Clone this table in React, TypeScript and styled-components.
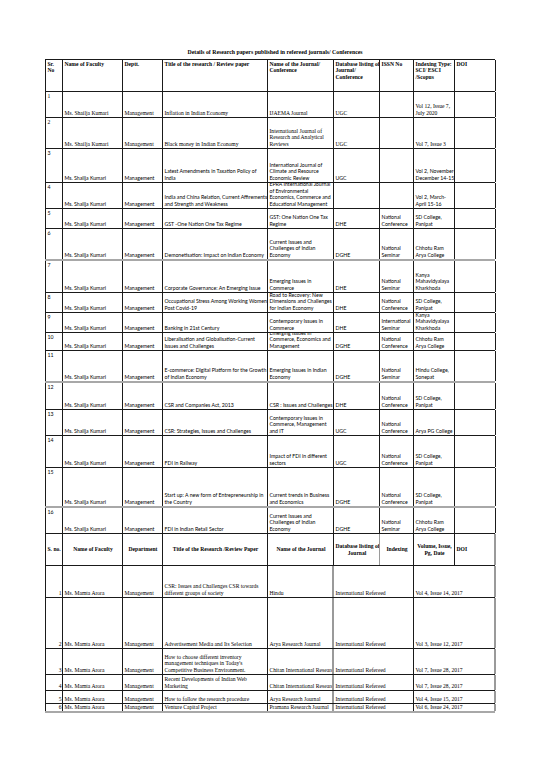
import React from "react";
import styled, { createGlobalStyle } from "styled-components";

const Global = createGlobalStyle`
  html, body { margin: 0; padding: 0; background: #ffffff; }
  body { font-family: "Liberation Serif", "Times New Roman", serif; color: #000; }
`;

const COLS = "17px 60px 40px 105px 66px 46px 34px 41px 41px";

const Sheet = styled.div`
  padding: 47px 0 0 45px;
  width: 450px;
`;

const Title = styled.div`
  height: 12px;
  font-size: 5.8px;
  font-weight: bold;
  text-align: center;
  line-height: 10px;
  padding-left: 10px;
`;

const Grid = styled.div`
  border-left: 1px solid #1a1a1a;
  border-top: 1px solid #1a1a1a;
  width: 450px;
  box-sizing: border-box;
`;

const Row = styled.div<{ $h: number; $line?: string; $lw?: number }>`
  display: grid;
  grid-template-columns: ${COLS};
  height: ${(p) => p.$h}px;
  box-sizing: border-box;
  border-bottom: ${(p) => p.$lw ?? 1}px solid ${(p) => p.$line ?? "#1a1a1a"};
  margin-left: -1px;
  padding-left: 1px;
`;

type CellProps = {
  $v?: "top" | "middle" | "bottom";
  $align?: "left" | "center" | "right";
  $bold?: boolean;
  $sans?: boolean;
  $span?: number;
  $rc?: string;
  $rw?: number;
};

const Cell = styled.div<CellProps>`
  display: flex;
  flex-direction: column;
  justify-content: ${(p) =>
    p.$v === "top" ? "flex-start" : p.$v === "middle" ? "center" : "flex-end"};
  text-align: ${(p) => p.$align ?? "left"};
  grid-column: span ${(p) => p.$span ?? 1};
  overflow: hidden;
  white-space: pre;
  box-sizing: border-box;
  padding: 0.5px 0.5px 0.3px 1.5px;
  border-right: ${(p) => p.$rw ?? 1}px solid ${(p) => p.$rc ?? "#1a1a1a"};
  font-family: ${(p) =>
    p.$sans ? '"Lato", "Open Sans", sans-serif' : '"Liberation Serif", "Times New Roman", serif'};
  font-size: ${(p) => (p.$sans ? "5.2px" : "5.6px")};
  line-height: 6.7px;
  font-weight: ${(p) => (p.$bold ? "bold" : "normal")};
`;

type R1 = { h: number; title: string; journal: string; db: string; issn: string; idx: string; line?: string; lw?: number; sans?: boolean };

const rows1: R1[] = [
  { h: 26, title: "Inflation in Indian Economy", journal: "IJAEMA Journal", db: "UGC", issn: "", idx: "Vol 12, Issue 7,\nJuly 2020" },
  { h: 31, title: "Black money in Indian Economy", journal: "International Journal of\nResearch and Analytical\nReviews", db: "UGC", issn: "", idx: "Vol 7, Issue 3" },
  { h: 34, title: "Latest Amendments in Taxation Policy of\nIndia", journal: "International Journal of\nClimate and Resource\nEconomic Review", db: "UGC", issn: "", idx: "Vol 2, November-\nDecember 14-15", sans: true },
  { h: 26, title: "India and China Relation, Current Affirements\nand Strength and Weakness", journal: "EPRA International Journal\nof Environmental\nEconomics, Commerce and\nEducational Management", db: "", issn: "", idx: "Vol 2, March-\nApril 15-16", sans: true },
  { h: 20, title: "GST -One Nation One Tax Regime", journal: "GST: One Nation One Tax\nRegime", db: "DHE", issn: "National\nConference", idx: "SD College,\nPanipat", sans: true },
  { h: 32, title: "Demonetisation: Impact on Indian Economy", journal: "Current Issues and\nChallenges of Indian\nEconomy", db: "DGHE", issn: "National\nSeminar", idx: "Chhotu Ram\nArya College", sans: true, line: "#a8a8a8", lw: 2 },
  { h: 32, title: "Corporate Governance: An Emerging Issue", journal: "Emerging Issues in\nCommerce", db: "DHE", issn: "National\nSeminar", idx: "Kanya\nMahavidyalaya\nKharkhoda", sans: true },
  { h: 20, title: "Occupational Stress Among Working Women\nPost Covid-19", journal: "Road to Recovery: New\nDimensions and Challenges\nfor Indian Economy", db: "DHE", issn: "National\nConference", idx: "SD College,\nPanipat", sans: true },
  { h: 20, title: "Banking in 21st Century", journal: "Contemporary Issues in\nCommerce", db: "DHE", issn: "International\nSeminar", idx: "Kanya\nMahavidyalaya\nKharkhoda", sans: true },
  { h: 18, title: "Liberalisation and Globalisation-Current\nIssues and Challenges", journal: "Emerging Issues in\nCommerce, Economics and\nManagement", db: "DGHE", issn: "National\nConference", idx: "Chhotu Ram\nArya College", sans: true },
  { h: 32, title: "E-commerce: Digital Platform for the Growth\nof Indian Economy", journal: "Emerging Issues in Indian\nEconomy", db: "DGHE", issn: "National\nSeminar", idx: "Hindu College,\nSonepat", sans: true, line: "#a8a8a8", lw: 2 },
  { h: 27, title: "CSR and Companies Act, 2013", journal: "CSR : Issues and Challenges", db: "DHE", issn: "National\nConference", idx: "SD College,\nPanipat", sans: true },
  { h: 26, title: "CSR: Strategies, Issues and Challenges", journal: "Contemporary Issues in\nCommerce, Management\nand IT", db: "UGC", issn: "National\nConference", idx: "Arya PG College", sans: true },
  { h: 32, title: "FDI in Railway", journal: "Impact of FDI in different\nsectors", db: "UGC", issn: "National\nConference", idx: "SD College,\nPanipat", sans: true },
  { h: 40, title: "Start up: A new form of Entrepreneurship in\nthe Country", journal: "Current trends in Business\nand Economics", db: "DGHE", issn: "National\nConference", idx: "SD College,\nPanipat", sans: true, line: "#a8a8a8", lw: 2 },
  { h: 26, title: "FDI in Indian Retail Sector", journal: "Current Issues and\nChallenges of Indian\nEconomy", db: "DGHE", issn: "National\nSeminar", idx: "Chhotu Ram\nArya College", sans: true },
];

type R2 = { h: number; title: string; journal: string; vol: string; line?: string; lw?: number };

const rows2: R2[] = [
  { h: 32, title: "CSR: Issues and Challenges CSR towards\ndifferent groups of society", journal: "Hindu", vol: "Vol 4, Issue 14, 2017" },
  { h: 51, title: "Advertisement Media and Its Selection", journal: "Arya Research Journal", vol: "Vol 3, Issue 12, 2017" },
  { h: 26, title: "How to choose different inventory\nmanagement techniques in Today's\nCompetitive Business Environment.", journal: "Chitan International Research Journal", vol: "Vol 7, Issue 28, 2017" },
  { h: 16, title: "Recent Developments of Indian Web\nMarketing", journal: "Chitan International Research Journal", vol: "Vol 7, Issue 28, 2017" },
  { h: 13, title: "How to follow the research procedure", journal: "Arya Research Journal", vol: "Vol 4, Issue 15, 2017" },
  { h: 9, title: "Venture Capital Project", journal: "Pramana Research Journal", vol: "Vol 6, Issue 24, 2017", line: "#a8a8a8", lw: 2 },
];

export default function App() {
  return (
    <>
      <Global />
      <Sheet>
        <Title>Details of Research papers published in refereed journals/ Conferences</Title>
        <Grid>
          <Row $h={32}>
            <Cell $v="top" $bold>{"Sr.\nNo"}</Cell>
            <Cell $v="top" $bold>Name of Faculty</Cell>
            <Cell $v="top" $bold>Deptt.</Cell>
            <Cell $v="top" $bold>Title of the research / Review paper</Cell>
            <Cell $v="top" $bold>{"Name of the Journal/\nConference"}</Cell>
            <Cell $v="top" $bold>{"Database listing of\nJournal/\nConference"}</Cell>
            <Cell $v="top" $bold>ISSN No</Cell>
            <Cell $v="top" $bold>{"Indexing Type:\nSCI/ ESCI\n/Scopus"}</Cell>
            <Cell $v="top" $bold>DOI</Cell>
          </Row>
          {rows1.map((r, i) => (
            <Row key={i} $h={r.h} $line={r.line} $lw={r.lw}>
              <Cell $v="top" $sans={r.sans}>{String(i + 1)}</Cell>
              <Cell $sans={r.sans}>Ms. Shailja Kumari</Cell>
              <Cell $sans={r.sans}>Management</Cell>
              <Cell $sans={r.sans}>{r.title}</Cell>
              <Cell $sans={r.sans}>{r.journal}</Cell>
              <Cell $sans={r.sans}>{r.db}</Cell>
              <Cell $sans={r.sans}>{r.issn}</Cell>
              <Cell $sans={r.sans}>{r.idx}</Cell>
              <Cell />
            </Row>
          ))}
          <Row $h={32}>
            <Cell $v="middle" $bold>S. no.</Cell>
            <Cell $v="middle" $align="center" $bold>Name of Faculty</Cell>
            <Cell $v="middle" $align="center" $bold>Department</Cell>
            <Cell $v="middle" $align="center" $bold>Title of the Research /Review Paper</Cell>
            <Cell $v="middle" $align="center" $bold>Name of the Journal</Cell>
            <Cell $v="middle" $align="center" $bold $rc="#9a9a9a">{"Database listing of\nJournal"}</Cell>
            <Cell $v="middle" $align="center" $bold>Indexing</Cell>
            <Cell $v="middle" $align="center" $bold>{"Volume, Issue,\nPg, Date"}</Cell>
            <Cell $v="middle" $bold $rc="#9a9a9a" $rw={2}>DOI</Cell>
          </Row>
          {rows2.map((r, i) => (
            <Row key={i} $h={r.h} $line={r.line} $lw={r.lw}>
              <Cell $align="right">{String(i + 1)}</Cell>
              <Cell>Ms. Mamta Arora</Cell>
              <Cell>Management</Cell>
              <Cell>{r.title}</Cell>
              <Cell $rc="#9a9a9a" $rw={2}>{r.journal}</Cell>
              <Cell $span={2}>International Refereed</Cell>
              <Cell $span={2} $rc="#9a9a9a" $rw={2}>{r.vol}</Cell>
            </Row>
          ))}
        </Grid>
      </Sheet>
    </>
  );
}
